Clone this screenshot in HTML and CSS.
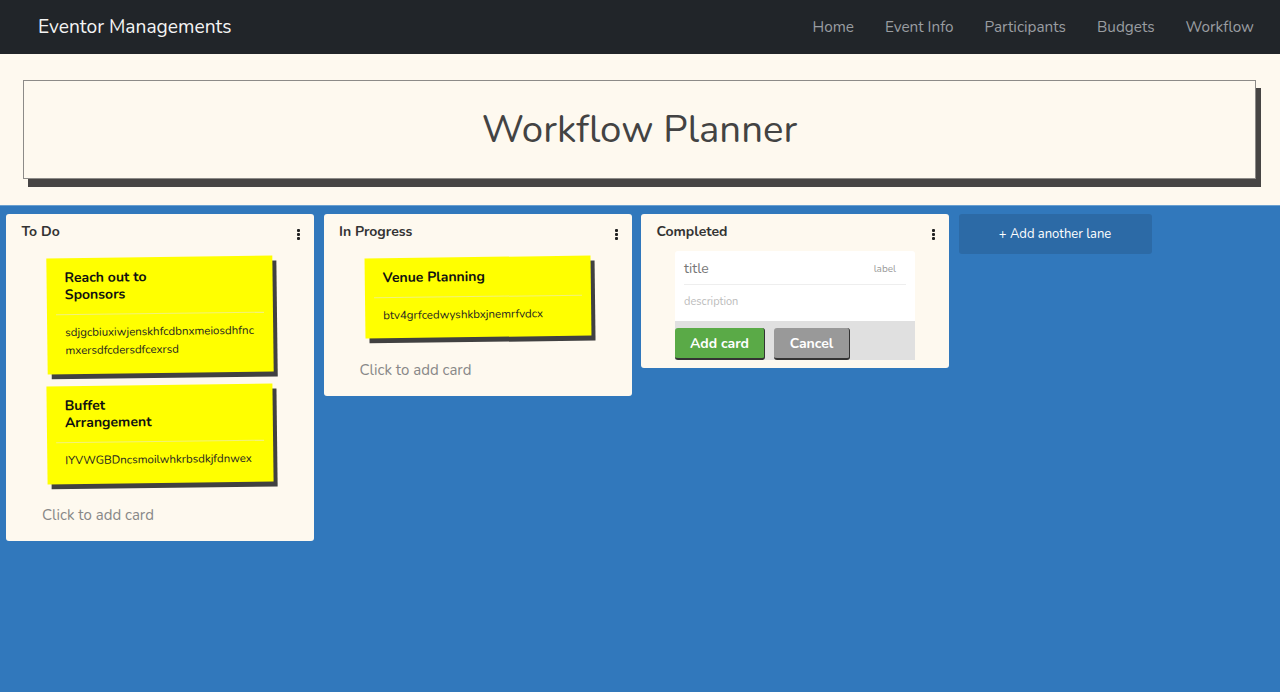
FILE: index.html
```html
<!DOCTYPE html>
<html>
<head>
<meta charset="utf-8">
<link rel="stylesheet" href="styles.css">
</head>
<body>
<nav class="navbar">
  <div class="brand">Eventor Managements</div>
  <ul class="nav-links">
    <li>Home</li>
    <li>Event Info</li>
    <li>Participants</li>
    <li>Budgets</li>
    <li>Workflow</li>
  </ul>
</nav>
<header class="page-head">
  <div class="title-box"><h1>Workflow Planner</h1></div>
</header>
<main class="board">
  <section class="lane lane-todo">
    <div class="lane-header"><span class="lane-title">To Do</span><span class="dots"><i></i><i></i><i></i></span></div>
    <div class="card">
      <div class="card-title"><span>Reach out to Sponsors</span></div>
      <div class="card-desc">sdjgcbiuxiwjenskhfcdbnxmeiosdhfnc mxersdfcdersdfcexrsd</div>
    </div>
    <div class="card">
      <div class="card-title"><span>Buffet Arrangement</span></div>
      <div class="card-desc">IYVWGBDncsmoilwhkrbsdkjfdnwex</div>
    </div>
    <div class="add-link">Click to add card</div>
  </section>
  <section class="lane lane-progress">
    <div class="lane-header"><span class="lane-title">In Progress</span><span class="dots"><i></i><i></i><i></i></span></div>
    <div class="card">
      <div class="card-title"><span>Venue Planning</span></div>
      <div class="card-desc">btv4grfcedwyshkbxjnemrfvdcx</div>
    </div>
    <div class="add-link">Click to add card</div>
  </section>
  <section class="lane lane-done">
    <div class="lane-header"><span class="lane-title">Completed</span><span class="dots"><i></i><i></i><i></i></span></div>
    <div class="new-card">
      <div class="new-card-box">
        <div class="new-card-top"><span class="ph-title">title</span><span class="ph-label">label</span></div>
        <div class="ph-desc">description</div>
      </div>
      <div class="new-card-actions">
        <button class="btn btn-add">Add card</button>
        <button class="btn btn-cancel">Cancel</button>
      </div>
    </div>
  </section>
  <button class="add-lane">+ Add another lane</button>
</main>
</body>
</html>
```

FILE: styles.css
```css
* { box-sizing: border-box; }
html, body { margin: 0; padding: 0; height: 100%; }
body {
  font-family: "Nunito", "Lato", "Noto Sans", sans-serif;
  background: #3178bc;
  overflow: hidden;
}
.navbar {
  height: 54px;
  background: #212529;
  display: flex;
  align-items: center;
  justify-content: space-between;
  padding: 0 26px 0 38px;
}
.brand {
  color: #f4f4f4;
  font-size: 19.2px;
}
.nav-links {
  list-style: none;
  margin: 0;
  padding: 0;
  display: flex;
  gap: 31px;
}
.nav-links li {
  color: #9a9da1;
  font-size: 15.3px;
}
.page-head {
  background: #fef9ef;
  padding: 26px 24px 26px 23px;
  height: 151px;
}
.title-box {
  height: 99px;
  border: 1px solid #8d8b88;
  box-shadow: 5px 8px 0 #474544;
  background: #fef9ef;
  display: flex;
  align-items: center;
  justify-content: center;
}
.title-box h1 {
  margin: 0;
  font-weight: 400;
  font-size: 38.4px;
  color: #434343;
}
.board {
  display: flex;
  align-items: flex-start;
  gap: 9.5px;
  padding: 8px 6px;
  border-top: 1px solid #6aa0d0;
}
.lane {
  width: 308px;
  background: #fef9ef;
  border-radius: 3px;
  padding: 8px 0 15px;
}
.lane-done { padding-bottom: 8px; }
.lane-header {
  display: flex;
  justify-content: space-between;
  align-items: flex-start;
  padding: 0 14px 0 15.5px;
  height: 28px;
}
.lane-title {
  font-size: 14px;
  font-weight: 700;
  color: #333;
}
.dots {
  display: flex;
  flex-direction: column;
  gap: 1.6px;
  margin-top: 7px;
}
.dots i {
  display: block;
  width: 2.6px;
  height: 2.6px;
  background: #222;
  border-radius: 1px;
}
.card {
  width: 226px;
  margin: 7px auto 12px;
  background: #ffff00;
  box-shadow: 4px 5px 0 #414141;
  transform: rotate(-0.7deg);
  padding: 11px 9px 15px;
}
.lane-progress .card { padding-bottom: 14px; margin-bottom: 13px; }
.card-title {
  font-size: 14px;
  font-weight: 700;
  color: #111;
  line-height: 17px;
  padding: 0 0 11px 9px;
  border-bottom: 1px solid #f2f27a;
}
.card-title span {
  display: block;
  max-width: 114px;
}
.card-desc {
  font-size: 11.5px;
  color: #222;
  line-height: 18px;
  padding: 8px 0 0 9px;
}
.add-link {
  color: #888;
  font-size: 15px;
  padding: 10px 0 0 36px;
  height: 31px;
}
.new-card {
  width: 240px;
  margin: 1px auto 0;
}
.new-card-box {
  background: #fff;
  border-radius: 3px 3px 0 0;
  padding: 8px 9px 0;
  height: 70px;
}
.new-card-top {
  display: flex;
  justify-content: space-between;
  align-items: center;
  border-bottom: 1px solid #eee;
  padding-bottom: 6px;
}
.ph-title { font-size: 14px; color: #777; }
.ph-label { font-size: 10px; color: #999; margin-right: 10px; }
.ph-desc { font-size: 11px; color: #bbb; padding-top: 9px; }
.new-card-actions {
  background: #e0e0e0;
  padding-top: 7px;
  height: 39px;
  display: flex;
  gap: 9px;
}
.btn {
  height: 32px;
  border: 1px solid #333;
  border-width: 0 1px 2px 0;
  border-radius: 3px;
  font-family: inherit;
  font-size: 14px;
  font-weight: 700;
  color: #fff;
  padding: 0;
}
.btn-add { width: 90px; background: #5aaa47; }
.btn-cancel { width: 76px; background: #999; }
.add-lane {
  width: 193px;
  height: 40px;
  background: #2c6aa6;
  border: none;
  border-radius: 3px;
  color: #fff;
  font-family: inherit;
  font-size: 13px;
}
```
